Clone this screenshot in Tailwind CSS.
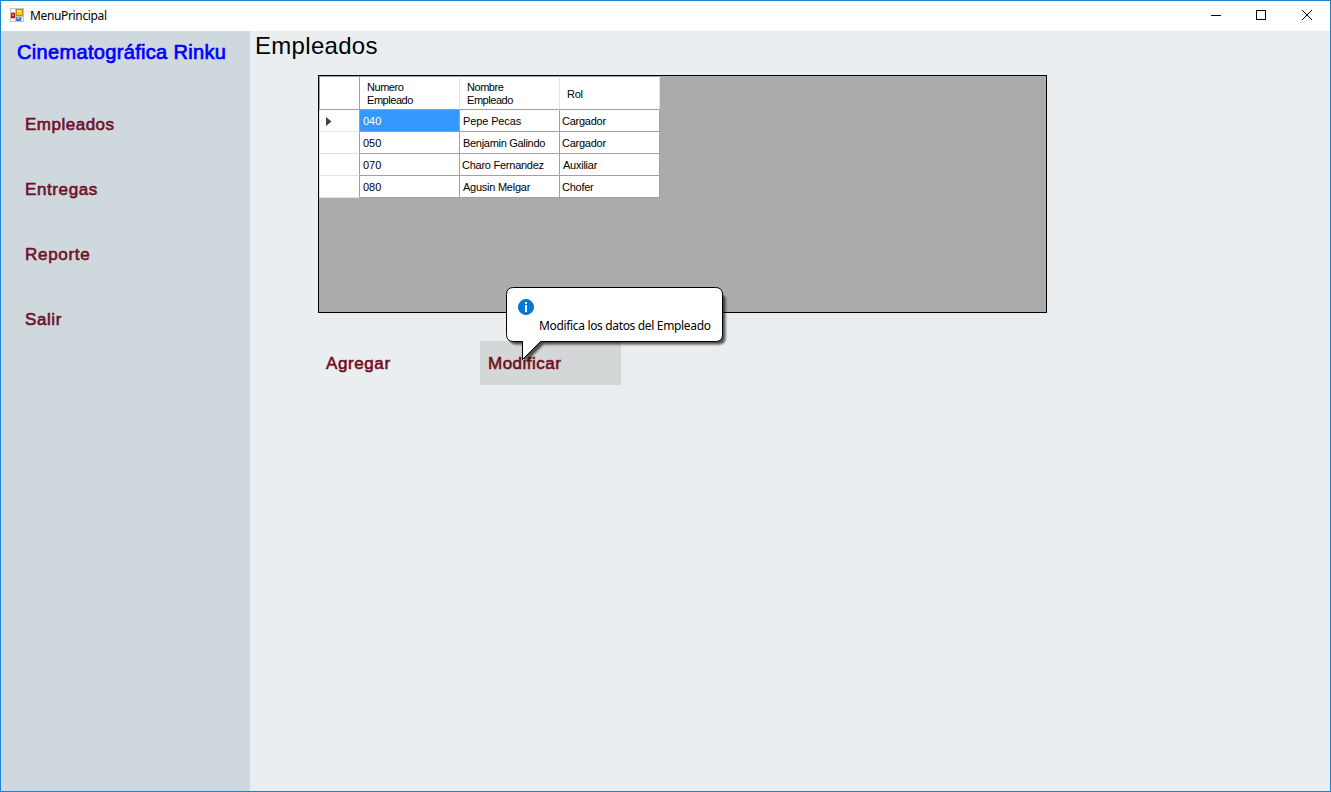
<!DOCTYPE html>
<html lang="es">
<head>
<meta charset="utf-8">
<title>MenuPrincipal</title>
<script src="https://cdn.jsdelivr.net/npm/@tailwindcss/browser@4"></script>
</head>
<body class="w-[1331px] h-[792px] overflow-hidden font-['Liberation_Sans',Arial,sans-serif] text-black">
<div class="flex h-[792px] w-[1331px] flex-col border border-[#1883d7] bg-white">
  <header class="flex h-[30px] shrink-0 items-center">
    <svg class="ml-[9px] -mt-[2px] h-[14px] w-[14px] shrink-0" viewBox="0 0 14 14" shape-rendering="crispEdges">
      <rect width="14" height="14" fill="#c4c4c4"/>
      <rect x="1" y="1" width="4" height="3" fill="#fff"/><rect x="1" y="11" width="4" height="2" fill="#fff"/><rect x="12" y="9" width="1" height="4" fill="#fff"/>
      <rect x="1" y="5" width="4" height="5" fill="#b21c14"/><rect x="2" y="6" width="2" height="2" fill="#e8735e"/>
      <rect x="6" y="1" width="7" height="7" fill="#c98a08"/><rect x="7" y="2" width="5" height="5" fill="#fbc531"/><rect x="7" y="2" width="4" height="2" fill="#ffe37c"/>
      <rect x="6" y="9" width="5" height="4" fill="#3c79d8"/><rect x="7" y="9" width="3" height="2" fill="#86b4f5"/>
    </svg>
    <span class="ml-[6px] text-[12px] leading-4 tracking-[-0.35px] font-['Noto_Sans',sans-serif]">MenuPrincipal</span>
    <svg class="ml-auto h-[30px] w-[138px]" viewBox="0 0 138 30" fill="none" stroke="#000" shape-rendering="crispEdges">
      <path d="M19 14.5h10M64.500 9.500h9v9h-9z"/>
      <path shape-rendering="auto" d="M110 9l10 10M120 9l-10 10"/>
    </svg>
  </header>
  <div class="flex min-h-0 grow">
    <aside class="w-[249px] shrink-0 bg-[#cfd8dd]">
      <h1 class="ml-4 mt-[9px] h-[25px] whitespace-nowrap text-[20px] leading-[25px] tracking-[0.330px] text-[#0000ff] [-webkit-text-stroke:0.7px_#0000ff]">Cinematográfica Rinku</h1>
      <nav class="ml-6 mt-[36px] flex flex-col text-[17px] leading-[65px] text-[#72102a] [-webkit-text-stroke:0.6px_#72102a]">
        <span class="-mt-[9px] tracking-[0.500px]">Empleados</span>
        <span class="tracking-[0.600px]">Entregas</span>
        <span class="tracking-[0.700px]">Reporte</span>
        <span class="tracking-[0.600px]">Salir</span>
      </nav>
    </aside>
    <main class="flex grow flex-col bg-[#eaeef1]">
      <h2 class="ml-[5px] h-[44px] text-[24px] leading-[30px] tracking-[0.300px]">Empleados</h2>
      <div class="ml-[68px] h-[238px] w-[729px] shrink-0 border border-black bg-[#ababab]">
        <div class="grid w-[341px] grid-cols-[41px_100px_100px_100px] grid-rows-[34px_22px_22px_22px_22px] text-[11px] leading-[23px] tracking-[-0.250px] [&>*]:whitespace-nowrap [&>*]:border-[#a0a0a0] [&>*]:border-r [&>*]:border-b [&>*]:bg-white">
          <div class="border-l border-t"></div>
          <div class="border-t border-r-[#e3e3e3]! pl-[7px] pt-[4px] leading-[13px] tracking-[-0.450px]">Numero<br>Empleado</div>
          <div class="border-t border-r-[#e3e3e3]! pl-[7px] pt-[4px] leading-[13px] tracking-[-0.450px]">Nombre<br>Empleado</div>
          <div class="border-t border-r-[#e3e3e3]! pl-[7px] pt-[11px] leading-[13px]">Rol</div>

          <div class="border-l border-l-[#e3e3e3]! border-b-[#e3e3e3]! pl-[6px] pt-[7px]"><svg class="h-[9px] w-[6px]" viewBox="0 0 6 9"><path d="M0 0L5.500 4.500L0 9z" fill="#404040"/></svg></div>
          <div class="bg-[#3399ff]! pl-[3px] tracking-[0px] text-white">040</div><div class="pl-[3px] tracking-[-0.120px]">Pepe Pecas</div><div class="pl-[2px]">Cargador</div>
          <div class="border-l border-l-[#e3e3e3]! border-b-[#e3e3e3]!"></div>
          <div class="pl-[3px] tracking-[0px]">050</div><div class="pl-[3px] tracking-[-0.300px]">Benjamin Galindo</div><div class="pl-[2px]">Cargador</div>
          <div class="border-l border-l-[#e3e3e3]! border-b-[#e3e3e3]!"></div>
          <div class="pl-[3px] tracking-[0px]">070</div><div class="pl-[2px]">Charo Fernandez</div><div class="pl-[3px]">Auxiliar</div>
          <div class="border-l border-l-[#e3e3e3]! border-b-[#e3e3e3]!"></div>
          <div class="pl-[3px] tracking-[0px]">080</div><div class="pl-[3px]">Agusin Melgar</div><div class="pl-[2px]">Chofer</div>
        </div>
      </div>
      <div class="ml-[76px] mt-[28px] flex h-[44px] text-[17px] leading-[45px] text-[#72101e] [-webkit-text-stroke:0.6px_#72101e]">
        <span class="w-[154px] tracking-[0.600px]">Agregar</span>
        <span class="w-[141px] bg-[#d3d7d8] pl-2 tracking-[0.500px]">Modificar</span>
      </div>
    </main>
  </div>
</div>
<div class="absolute left-[506px] top-[287px] h-[78px] w-[224px]">
  <svg class="absolute left-0 top-0 h-[78px] w-[224px] overflow-visible" viewBox="0 0 224 78">
    <path d="M7.500 .5H209.500L216.500 7.500V47.500Q216.500 54.500 209.500 54.500H34.500L16.500 72.500V54.500H7.500Q.5 54.500 .5 47.500V7.500Q.5 .5 7.500 .5z" transform="translate(3 3)" fill="#000" fill-opacity=".65" style="filter:blur(1px)"/>
    <path d="M7.500 .5H209.500Q216.500 .5 216.500 7.500V47.500Q216.500 54.500 209.500 54.500H34.500L16.500 72.500V54.500H7.500Q.5 54.500 .5 47.500V7.500Q.5 .5 7.500 .5z" fill="#fff" stroke="#000"/>
    <circle cx="20" cy="20" r="7.600" fill="#0078d7" stroke="#0062b1" stroke-width=".8"/>
    <path d="M19 15h2v2h-2zM19 18h2v7h-2z" fill="#fff"/>
  </svg>
  <span class="absolute left-[33px] top-[31px] whitespace-nowrap text-[12px] leading-4 tracking-[-0.340px] font-['Noto_Sans',sans-serif]">Modifica los datos del Empleado</span>
</div>
</body>
</html>
